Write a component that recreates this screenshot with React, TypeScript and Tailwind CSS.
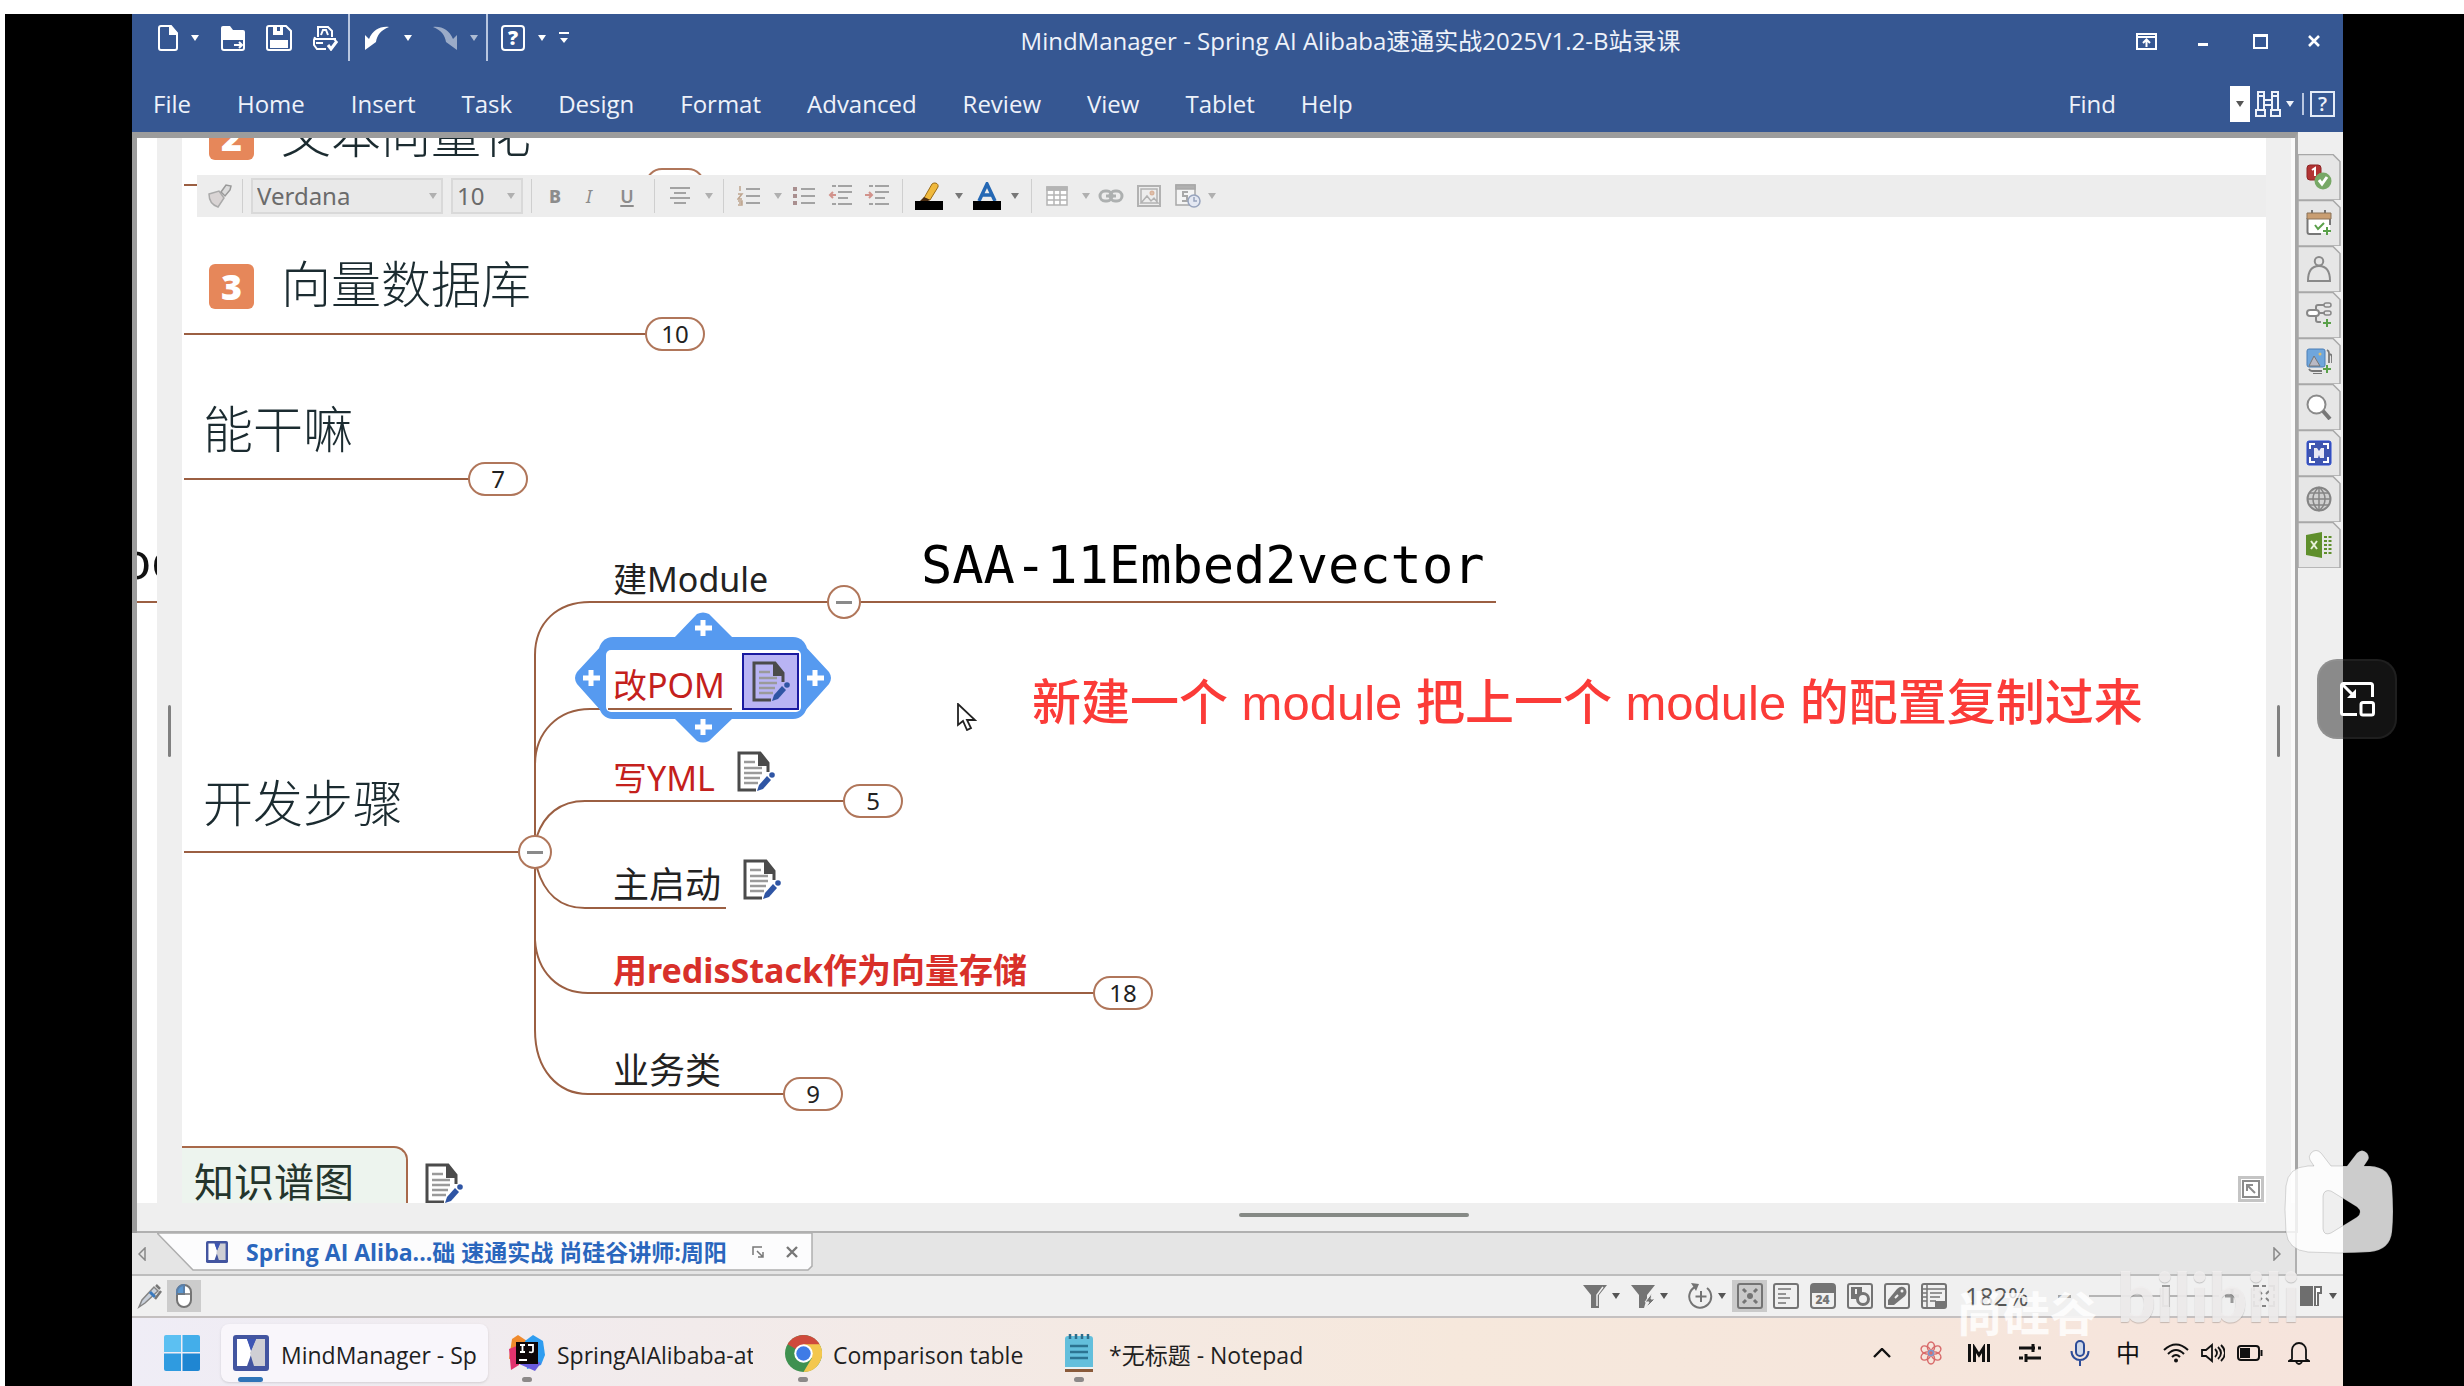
import type { ReactNode } from "react";

const UI = "font-['Open_Sans','Noto_Sans_CJK_SC',sans-serif]";
const MAP = "font-['Noto_Sans','Noto_Sans_CJK_SC',sans-serif]";

function Caret({ className = "" }: { className?: string }) {
  return (
    <svg viewBox="0 0 8 6" className={`h-[6px] w-[8px] shrink-0 fill-current ${className}`} aria-hidden="true">
      <path d="M0 0h8L4 6z" />
    </svg>
  );
}

function IconButton({ label, className = "", children }: { label: string; className?: string; children: ReactNode }) {
  return (
    <button type="button" aria-label={label} className={`flex shrink-0 items-center justify-center ${className}`}>
      {children}
    </button>
  );
}

/* ---------- Title bar ---------- */

function QuickAccess() {
  return (
    <div className="flex h-[47px] items-center self-start text-white">
      <IconButton label="New" className="w-[40px]">
        <svg viewBox="0 0 20 26" className="h-[26px] w-[20px]" fill="none" stroke="currentColor" strokeWidth="2">
          <path d="M3 1h10l6 7v15a2 2 0 0 1-2 2H3a2 2 0 0 1-2-2V3a2 2 0 0 1 2-2z" />
          <path d="M12 1v8h7z" fill="currentColor" />
        </svg>
      </IconButton>
      <IconButton label="New options" className="w-[14px]"><Caret /></IconButton>
      <IconButton label="Open" className="ml-2 w-[46px]">
        <svg viewBox="0 0 26 26" className="size-[26px]">
          <path d="M1 3a2 2 0 0 1 2-2h7l3 4h10a2 2 0 0 1 2 2v8H1z" fill="currentColor" />
          <path d="M2 12v11a2 2 0 0 0 2 2h18a2 2 0 0 0 2-2V12" fill="none" stroke="currentColor" strokeWidth="2" />
          <path d="M14 20h8M19 17l3 3-3 3" fill="none" stroke="currentColor" strokeWidth="2" />
        </svg>
      </IconButton>
      <IconButton label="Save" className="w-[46px]">
        <svg viewBox="0 0 26 26" className="size-[26px]">
          <path d="M3 1h17l5 5v17a2 2 0 0 1-2 2H3a2 2 0 0 1-2-2V3a2 2 0 0 1 2-2z" fill="none" stroke="currentColor" strokeWidth="2" />
          <path d="M7 1h4v5h3V1h3v9H7zM4 15h18v8H4z" fill="currentColor" />
        </svg>
      </IconButton>
      <IconButton label="Print" className="w-[46px]">
        <svg viewBox="0 0 26 26" className="size-[26px]" fill="none" stroke="currentColor" strokeWidth="2">
          <path d="M6 12V2h10l4 4v6M2 14h22M3 12l-1 3v5l3 4h9M4 18h7M22 14l2 2M9 10l2-5h3l2 5" />
          <path d="M16 20l3 4 6-8" strokeWidth="3" />
        </svg>
      </IconButton>
      <div className="h-[47px] w-[2px] bg-[#b8c6e0]" />
      <IconButton label="Undo" className="w-[54px]">
        <svg viewBox="0 0 26 26" className="size-[26px]">
          <path d="M1 25V10l4 4C9 5 16 1 25 2 17 5 13 10 12 17z" fill="currentColor" />
        </svg>
      </IconButton>
      <IconButton label="Undo list" className="w-[8px]"><Caret /></IconButton>
      <IconButton label="Redo" className="ml-2 w-[50px] opacity-50">
        <svg viewBox="0 0 26 26" className="size-[26px]">
          <path d="M25 25V10l-4 4C17 5 10 1 1 2c8 3 12 8 13 15z" fill="currentColor" />
        </svg>
      </IconButton>
      <IconButton label="Redo list" className="w-[8px] opacity-60"><Caret /></IconButton>
      <div className="ml-2 h-[47px] w-[2px] bg-[#b8c6e0]" />
      <IconButton label="Help" className="w-[50px]">
        <span className="flex h-[26px] w-[24px] items-center justify-center rounded border-2 border-white text-xl leading-none font-extrabold">?</span>
      </IconButton>
      <IconButton label="Help options" className="w-[8px]"><Caret /></IconButton>
      <IconButton label="Customize toolbar" className="w-[36px]">
        <svg viewBox="0 0 10 12" className="h-[12px] w-[10px] fill-current"><path d="M0 0h10v2H0zM1 6h8l-4 5z" /></svg>
      </IconButton>
    </div>
  );
}

function WindowControls() {
  return (
    <div className="flex h-full items-center text-white">
      <IconButton label="Ribbon display" className="w-[54px]">
        <svg viewBox="0 0 21 17" className="h-[17px] w-[21px]" fill="none" stroke="currentColor" strokeWidth="2">
          <path d="M1 1h19v15H1zM1 4h19M10.500 14V7M7 10l3.500-3.500L14 10" />
        </svg>
      </IconButton>
      <IconButton label="Minimize" className="w-[60px]"><span className="mt-[6px] h-[3px] w-[10px] bg-white" /></IconButton>
      <IconButton label="Maximize" className="w-[54px]"><span className="h-[15px] w-[15px] border-2 border-t-[3px] border-white" /></IconButton>
      <IconButton label="Close" className="w-[54px]">
        <svg viewBox="0 0 12 12" className="size-[12px]" stroke="currentColor" strokeWidth="2.600"><path d="M1 1l10 10M11 1L1 11" /></svg>
      </IconButton>
    </div>
  );
}

const MENUS = ["File", "Home", "Insert", "Task", "Design", "Format", "Advanced", "Review", "View", "Tablet", "Help"];

function Header() {
  return (
    <header className="bg-[#365792] text-[#eef2fa]">
      <div className="flex h-[54px] items-center pr-[2px] pl-[16px]">
        <QuickAccess />
        <h1 className="flex-1 text-center text-[24px] leading-[40px] whitespace-nowrap">MindManager - Spring AI Alibaba速通实战2025V1.2-B站录课</h1>
        <WindowControls />
      </div>
      <div className="flex h-[64px] items-center justify-between pt-[8px] pr-[8px]">
        <nav className="flex gap-[46px] pl-[21px] text-[24px]">
          {MENUS.map((m) => (
            <button key={m} type="button" className="leading-[36px]">{m}</button>
          ))}
        </nav>
        <div className="flex items-center">
          <label htmlFor="find" className="text-[24px] leading-[36px]">Find</label>
          <input id="find" className="h-[36px] w-[114px] bg-transparent px-2 outline-none" />
          <IconButton label="Find history" className="h-[36px] w-[20px] bg-white text-[#555]"><Caret /></IconButton>
          <IconButton label="Search" className="w-[36px]">
            <svg viewBox="0 0 26 26" className="size-[26px]" fill="none" stroke="currentColor" strokeWidth="2">
              <path d="M3 1h6v4H3zM17 1h6v4h-6zM3 5v14M9 5v14M17 5v14M23 5v14M9 9h8M9 14h8M1 19h9v6H1zM16 19h9v6h-9z" />
            </svg>
          </IconButton>
          <Caret />
          <div className="ml-[8px] h-[22px] w-[2px] bg-[#b8c6e0]" />
          <button type="button" aria-label="Help topics" className="ml-[6px] flex h-[26px] w-[25px] items-center justify-center border-2 border-[#e4ebf7] text-xl leading-none font-semibold">?</button>
        </div>
      </div>
    </header>
  );
}

/* ---------- Formatting toolbar ---------- */

const sep = <div className="h-[34px] w-px shrink-0 bg-[#cfcfcf]" />;

function Lines({ d, children }: { d: string; children?: ReactNode }) {
  return (
    <svg viewBox="0 0 24 22" className="h-[22px] w-[24px]" fill="none" stroke="#a3a3a3" strokeWidth="2">
      <path d={d} />
      {children}
    </svg>
  );
}

function FormatBar() {
  return (
    <div className="absolute top-[37px] right-0 left-[15px] flex h-[42px] items-center bg-[#ededed] text-[#b0b0b0]">
      <IconButton label="Format painter" className="w-[45px]">
        <svg viewBox="0 0 26 24" className="h-[24px] w-[26px]">
          <path d="M2 10l10-3 5 7-6 9C5 21 2 16 2 10z" fill="#d9d4d4" stroke="#aaa" strokeWidth="1.500" />
          <path d="M14 8l5-7 5 1-1 4-5 6z" fill="#dcdcdc" stroke="#999" strokeWidth="1.500" />
        </svg>
      </IconButton>
      {sep}
      <div className="relative mx-[8px] flex items-center">
        <select aria-label="Font" className="h-[36px] w-[192px] appearance-none border-2 border-[#d9d9d9] bg-[#e9e9e9] px-[4px] text-[24px] leading-none text-[#6b6b6b]"><option>Verdana</option></select>
        <Caret className="pointer-events-none absolute right-[6px]" />
      </div>
      <div className="relative mr-[8px] flex items-center">
        <select aria-label="Font size" className="h-[36px] w-[72px] appearance-none border-2 border-[#d9d9d9] bg-[#e9e9e9] px-[4px] text-[24px] leading-none text-[#6b6b6b]"><option>10</option></select>
        <Caret className="pointer-events-none absolute right-[8px]" />
      </div>
      {sep}
      <button type="button" className="w-[46px] text-[18px] font-extrabold text-[#8c8c8c]">B</button>
      <button type="button" className="w-[22px] text-[18px] text-[#8c8c8c] italic">I</button>
      <button type="button" className="w-[54px] text-[18px] font-semibold text-[#8c8c8c] underline decoration-2 underline-offset-2">U</button>
      {sep}
      <IconButton label="Align" className="w-[50px]"><Lines d="M2 3h20M6 8h12M2 13h20M6 18h12" /></IconButton>
      <Caret className="mr-[10px]" />
      {sep}
      <IconButton label="Numbered list" className="w-[50px]">
        <Lines d="M9 4h14M9 11h14M9 18h14"><path d="M3 1v5M1 9h4l-4 5h4M1 16h4v4H1M5 18H2" stroke="#bfa58f" strokeWidth="1.500" /></Lines>
      </IconButton>
      <Caret className="mr-[4px]" />
      <IconButton label="Bullets" className="w-[36px]">
        <Lines d="M9 4h14M9 11h14M9 18h14"><path d="M1 4h4M1 11h4M1 18h4" stroke="#a98f8f" strokeWidth="4" /></Lines>
      </IconButton>
      <IconButton label="Outdent" className="w-[36px]">
        <Lines d="M4 1h4M10 1h14M10 7h14M10 13h10M4 19h4M10 19h14"><path d="M8 10H2M5 7l-3 3 3 3" stroke="#d2938c" /></Lines>
      </IconButton>
      <IconButton label="Indent" className="mr-[6px] w-[38px]">
        <Lines d="M4 1h4M10 1h14M10 7h14M10 13h10M4 19h4M10 19h14"><path d="M0 10h6M4 7l3 3-3 3" stroke="#d2938c" /></Lines>
      </IconButton>
      {sep}
      <IconButton label="Highlight" className="w-[52px]">
        <svg viewBox="0 0 28 28" className="size-[28px]">
          <path d="M9 16L17 2c2-2 7-1 6 3l-8 13z" fill="#f0b93c" stroke="#9a6a14" strokeWidth="1" />
          <path d="M4 20l5-5 6 3-6 3z" fill="#4a2c10" />
          <path d="M0 19h28v9H0z" fill="#000" />
        </svg>
      </IconButton>
      <Caret className="text-[#777]" />
      <IconButton label="Font color" className="w-[48px]">
        <svg viewBox="0 0 28 28" className="size-[28px]">
          <path d="M6 19L14 2l8 17M9 13h10" fill="none" stroke="#2568b4" strokeWidth="3.500" />
          <path d="M0 19h28v9H0z" fill="#000" />
        </svg>
      </IconButton>
      <Caret className="mr-[12px] text-[#777]" />
      {sep}
      <IconButton label="Table" className="w-[50px]">
        <svg viewBox="0 0 22 20" className="h-[20px] w-[22px]" fill="#fff" stroke="#b4b4b4" strokeWidth="1.500">
          <path d="M1 1h20v18H1z" /><path d="M1 4h20M1 9h20M1 14h20M8 4v15M14 4v15" /><path d="M1 1h20v3H1z" fill="#b4b4b4" />
        </svg>
      </IconButton>
      <Caret />
      <IconButton label="Link" className="ml-[2px] w-[38px]">
        <svg viewBox="0 0 26 14" className="h-[14px] w-[26px]" fill="none" stroke="#adb0b0" strokeWidth="3">
          <rect x="2" y="2" width="12" height="10" rx="5" /><rect x="12" y="2" width="12" height="10" rx="5" /><path d="M8 7h10" />
        </svg>
      </IconButton>
      <IconButton label="Image" className="w-[38px]">
        <svg viewBox="0 0 24 22" className="h-[22px] w-[24px]" fill="none" stroke="#b2b2b2" strokeWidth="2">
          <path d="M1 1h22v20H1z" /><path d="M4 18l6-7 4 5 3-3 4 5zM4 4h16v14H4z" strokeWidth="1.500" /><circle cx="15" cy="8" r="1.500" stroke="#d9b39b" />
        </svg>
      </IconButton>
      <IconButton label="Date" className="w-[40px]">
        <svg viewBox="0 0 26 24" className="h-[24px] w-[26px]" fill="none" stroke="#a8a8a8" strokeWidth="1.500">
          <path d="M1 1h19v20H1z" fill="#f4f4f4" /><path d="M1 1h19v4H1z" fill="#b0b0b0" /><path d="M13 8H8v4h4v5H7" strokeWidth="2" />
          <circle cx="19" cy="17" r="6" fill="#e4e8f2" stroke="#98a4bd" /><path d="M19 13v4h3" stroke="#98a4bd" />
        </svg>
      </IconButton>
      <Caret />
    </div>
  );
}

/* ---------- Mind map ---------- */

function Count({ n, className }: { n: number; className: string }) {
  return (
    <button type="button" className={`absolute flex h-[34px] w-[60px] items-center justify-center rounded-[17px] border-2 border-[#b0765a] bg-white text-[24px] leading-[30px] text-[#222] ${className}`}>
      {n}
    </button>
  );
}

function Collapse({ className }: { className: string }) {
  return (
    <button type="button" aria-label="Collapse" className={`absolute flex size-[34px] items-center justify-center rounded-full border-2 border-[#b0765a] bg-white ${className}`}>
      <span className="h-[3px] w-[16px] bg-[#8a8a8a]" />
    </button>
  );
}

function NoteIcon({ className = "" }: { className?: string }) {
  return (
    <svg viewBox="0 0 40 42" className={`h-[42px] w-[40px] ${className}`} aria-label="Notes">
      <path d="M20 39H3V2h21l8 10v9" fill="none" stroke="#4b4b4b" strokeWidth="3" />
      <path d="M22 1l11 12v2H22z" fill="#4b4b4b" />
      <path d="M8 11h11M8 17h18M8 22h18M8 27h16M8 32h14" stroke="#9a9a9a" strokeWidth="2.500" />
      <path d="M21 40l2-6 8-9 4 4-8 9z" fill="#2f55a4" />
      <circle cx="36" cy="24" r="2.800" fill="#2f55a4" />
    </svg>
  );
}

function NumberBadge({ n, className }: { n: number; className: string }) {
  return (
    <span className={`absolute flex size-[45px] items-center justify-center rounded-md bg-[#e6875a] font-['Open_Sans',sans-serif] text-[36px] leading-none font-extrabold text-white ${className}`}>{n}</span>
  );
}

function Topic({ className, children }: { className: string; children: ReactNode }) {
  return <div className={`absolute leading-none whitespace-nowrap ${className}`}>{children}</div>;
}

function Canvas() {
  return (
    <section aria-label="Mind map" className={`relative min-w-0 flex-1 overflow-hidden bg-white ${MAP}`}>
      <div className="absolute top-[1008px] left-0 h-[70px] w-[226px] rounded-tr-[14px] border-t-2 border-r-2 border-[#a8694a] bg-[#edf4ee]" />
      <svg viewBox="182 138 2084 1066" className="absolute top-0 left-0 h-[1066px] w-[2084px]" fill="none" stroke="#9b5f42" strokeWidth="2" aria-hidden="true">
        <path d="M184 185h466M184 334h462M184 479h286M184 852h336" />
        <path d="M535 836V655C535 622 558 602 590 602H828M861 602H1496" />
        <path d="M535 765C535 732 558 709 590 709H606" />
        <path d="M537 836C544 815 560 801 585 801H844" />
        <path d="M537 868C544 893 560 908 585 908H726" />
        <path d="M535 868V940C537 972 558 993 588 993H1094" />
        <path d="M535 868V1030C535 1070 558 1094 588 1094H784" />
        <g stroke="none" fill="#569af0">
          <path d="M674 638L697 614q6-3 12 0L733 638zM674 718L697 741q6 3 12 0L733 718zM602 645L577 672q-4 6 0 12L602 712zM804 645L829 672q4 6 0 12L804 712z" />
          <rect x="599" y="637" width="208" height="82" rx="14" />
          <rect x="606" y="650" width="195" height="62" rx="5" fill="#fff" />
        </g>
        <path d="M695 628h17M703 620v16M695 727h17M703 719v16M583 678h17M591 670v16M807 678h17M815 670v16" stroke="#fff" strokeWidth="5" />
        <path d="M608 709h124" />
      </svg>

      <NumberBadge n={2} className="-top-[23px] left-[27px]" />
      <Topic className="-top-[29px] left-[99px] text-[50px] font-light text-[#1b2b30]">文本向量化</Topic>
      <Count n={11} className="top-[30px] left-[463px]" />
      <NumberBadge n={3} className="top-[126px] left-[27px]" />
      <Topic className="top-[121px] left-[99px] text-[50px] font-light text-[#1b2b30]">向量数据库</Topic>
      <Count n={10} className="top-[179px] left-[463px]" />
      <Topic className="top-[266px] left-[21px] text-[50px] font-light text-[#1b2b30]">能干嘛</Topic>
      <Count n={7} className="top-[324px] left-[286px]" />
      <Topic className="top-[640px] left-[21px] text-[50px] font-light text-[#1b2b30]">开发步骤</Topic>
      <Collapse className="top-[697px] left-[336px]" />

      <Topic className="top-[424px] left-[431px] text-[34px] text-[#222]">建Module</Topic>
      <Collapse className="top-[447px] left-[645px]" />
      <Topic className="top-[401px] left-[739px] font-['DejaVu_Sans_Mono',monospace] text-[52px] text-black">SAA-11Embed2vector</Topic>

      <Topic className="top-[530px] left-[431px] text-[34px] text-[#c4201c]">改POM</Topic>
      <div className="absolute top-[515px] left-[560px] flex size-[57px] items-center justify-center border-2 border-[#1a1aa0] bg-[#b9b4f4]">
        <NoteIcon />
      </div>
      <Topic className="top-[623px] left-[431px] text-[34px] text-[#c4201c]">写YML</Topic>
      <NoteIcon className="absolute top-[613px] left-[554px]" />
      <Count n={5} className="top-[646px] left-[661px]" />
      <Topic className="top-[729px] left-[431px] text-[36px] text-[#222]">主启动</Topic>
      <NoteIcon className="absolute top-[721px] left-[560px]" />
      <Topic className="top-[815px] left-[431px] text-[34px] font-bold text-[#d8302a]">用redisStack作为向量存储</Topic>
      <Count n={18} className="top-[838px] left-[911px]" />
      <Topic className="top-[915px] left-[431px] text-[36px] text-[#222]">业务类</Topic>
      <Count n={9} className="top-[939px] left-[601px]" />
      <Topic className="top-[1024px] left-[12px] text-[40px] text-[#24352c]">知识谱图</Topic>
      <NoteIcon className="absolute top-[1025px] left-[242px]" />

      <p className="absolute top-[541px] left-[850px] font-['Liberation_Sans','Noto_Sans_CJK_SC',sans-serif] text-[49px] leading-none font-medium whitespace-nowrap text-[#fb3b38]">
        新建一个 module 把上一个 module 的配置复制过来
      </p>
      <svg viewBox="0 0 20 28" className="absolute top-[565px] left-[775px] h-[28px] w-[20px]" aria-hidden="true">
        <path d="M1 1v21l5-4 4 9 4-2-4-8h8z" fill="#fff" stroke="#222" strokeWidth="1.800" />
      </svg>

      <FormatBar />
      <button type="button" aria-label="Map overview" className="absolute right-[2px] bottom-[1px] flex size-[26px] items-center justify-center border-[3px] border-[#c4c4c4] bg-white">
        <svg viewBox="0 0 18 18" className="size-[18px]" fill="none" stroke="#8c8c8c" strokeWidth="2"><path d="M1 1h16v16H1zM13 13L6 6M5 11V5h6" /></svg>
      </button>
    </section>
  );
}

/* ---------- Side panel tabs ---------- */

const plus = <path d="M21 17v8M17 21h8" stroke="#5aa04a" strokeWidth="2" />;

const SIDE: { label: string; icon: ReactNode }[] = [
  {
    label: "Markers",
    icon: (
      <>
        <rect x="1" y="1" width="14" height="15" rx="3" fill="#b23434" stroke="#8d2424" />
        <path d="M6 6l3-2v8" stroke="#fff" strokeWidth="2" />
        <circle cx="17" cy="17" r="8.500" fill="#77a866" stroke="none" />
        <path d="M13 16l3 4 5-7" stroke="#fff" strokeWidth="3" />
      </>
    ),
  },
  {
    label: "Task info",
    icon: (
      <>
        <path d="M2 4h22v19H2z" fill="#fff" stroke="none" />
        <path d="M1.500 8v14a2 2 0 0 0 2 2H15M24 8v7M6 0v4M19 0v4" stroke="#777" strokeWidth="2" />
        <path d="M1 3h24v6H1z" fill="#c99e72" stroke="#8a7258" />
        <path d="M9 15l3 4 6-6" stroke="#5aa04a" strokeWidth="2" />
        {plus}
      </>
    ),
  },
  { label: "Resources", icon: <path d="M13 1a4 4 0 1 1 0 8.500A4 4 0 0 1 13 1zM2 25c0-10 4-15 11-15s11 5 11 15z" stroke="#8a8a8a" strokeWidth="2" /> },
  {
    label: "Map parts",
    icon: (
      <>
        <path d="M10 8V5a2 2 0 0 1 2-2h6M13 11h6M10 14v4a2 2 0 0 0 2 2h3" stroke="#888" strokeWidth="2" />
        <rect x="1" y="8" width="12" height="6" rx="3" fill="#fff" stroke="#888" strokeWidth="2" />
        <rect x="18" y="1" width="7" height="4" rx="2" stroke="#888" strokeWidth="1.500" />
        <rect x="18" y="9" width="7" height="4" rx="2" stroke="#888" strokeWidth="1.500" />
        {plus}
      </>
    ),
  },
  {
    label: "Library",
    icon: (
      <>
        <rect x="1" y="1" width="18" height="18" rx="2" fill="#6fa6dc" stroke="#4d7fb6" />
        <path d="M3 18l5-10 6 10z" fill="#b9b9c4" stroke="#777" />
        <circle cx="14" cy="6" r="1.500" fill="#e0c070" stroke="none" />
        <path d="M21 2q2 1 2 3v10M24 6q2 1 2 3v6M3 21q1 2 3 2h10M7 26h9" stroke="#777" strokeWidth="1.800" />
        {plus}
      </>
    ),
  },
  { label: "Search", icon: <><circle cx="10.500" cy="10.500" r="9" fill="#fff" stroke="#8a8a8a" strokeWidth="2" /><path d="M17 17l7 8" stroke="#777" strokeWidth="4" /></> },
  {
    label: "Capture",
    icon: (
      <>
        <rect x="1" y="1" width="24" height="24" rx="2" fill="#3f55b0" stroke="#2b4bd0" />
        <path d="M4 9V4h5M17 4h5v5M22 17v5h-5M9 22H4v-5" stroke="#fff" strokeWidth="2" />
        <path d="M8 8h3l2 3 2-3h3v10h-4l-1-3-1 3H8z" fill="#e8e8f4" stroke="none" />
      </>
    ),
  },
  {
    label: "Browser",
    icon: <><circle cx="13" cy="13" r="11.500" fill="#cfcfcf" stroke="#858585" strokeWidth="2" /><path d="M13 1v24M1 13h24M3 7h20M3 19h20M13 1c-8 7-8 17 0 24M13 1c8 7 8 17 0 24" stroke="#858585" strokeWidth="1.500" /></>,
  },
  {
    label: "Excel",
    icon: (
      <>
        <path d="M0 3l16-3v26L0 23z" fill="#5f8f2c" stroke="none" />
        <path d="M5 9l6 8M11 9l-6 8" stroke="#e6f0d8" strokeWidth="2" />
        <path d="M18 5h8M18 9h8M18 13h8M18 17h8M18 21h8" stroke="#5f8f2c" strokeWidth="2" strokeDasharray="3 1.500" />
      </>
    ),
  },
];

function SideTabs() {
  return (
    <aside className="w-[45px] shrink-0 bg-[#efefef] pt-[22px]">
      {SIDE.map((s) => (
        <button key={s.label} type="button" aria-label={s.label} className="relative flex h-[46px] w-[43px] items-center pl-[8px]">
          <svg viewBox="0 0 43 46" className="absolute inset-0 size-full" aria-hidden="true">
            <path d="M0 .500h35l7 7V46H0z" fill="#e6e6e6" stroke="#a8a8a8" strokeWidth="1.500" />
          </svg>
          <svg viewBox="0 0 26 26" className="relative size-[26px]" fill="none" aria-hidden="true">{s.icon}</svg>
        </button>
      ))}
    </aside>
  );
}

/* ---------- Document tab strip ---------- */

function MindIcon({ className }: { className: string }) {
  return (
    <svg viewBox="0 0 36 36" className={className} aria-hidden="true">
      <rect width="36" height="36" rx="3" fill="#4355a0" />
      <path d="M4 4h10l5 13-5 14H4z" fill="#fff" />
      <path d="M32 4h-9l-6 14 4 13h11z" fill="#cfcfd4" />
      <path d="M14 4h9l-5 12z" fill="#3d56b5" />
    </svg>
  );
}

function DocTabs() {
  return (
    <div className="flex h-[43px] shrink-0 border-b-2 border-[#bdbdbd] bg-[#e5e5e5]">
      <IconButton label="Scroll tabs left" className="w-[20px]">
        <svg viewBox="0 0 8 14" className="h-[14px] w-[8px]" fill="none" stroke="#888" strokeWidth="1.500"><path d="M7 1v12L1 7z" /></svg>
      </IconButton>
      <div className="relative ml-[5px] flex h-[38px] w-[656px] items-center pl-[49px]">
        <svg viewBox="0 0 656 39" preserveAspectRatio="none" className="absolute inset-0 size-full" aria-hidden="true">
          <path d="M0 0L36 38H651l4-4V0z" fill="#fcfcfd" stroke="#aeaeae" strokeWidth="1.500" />
        </svg>
        <MindIcon className="relative h-[24px] w-[22px]" />
        <button type="button" className="relative ml-[18px] text-[23px] leading-[34px] font-bold whitespace-nowrap text-[#2a66bd]">Spring AI Aliba...础 速通实战 尚硅谷讲师:周阳</button>
        <div className="relative ml-auto flex items-center pr-[4px]">
          <IconButton label="Restore" className="w-[34px]">
            <svg viewBox="0 0 12 12" className="size-[12px]" fill="none" stroke="#777"><path d="M1 9V1h9M5 5l6 6M11 6v5H6" strokeWidth="1.500" /></svg>
          </IconButton>
          <IconButton label="Close tab" className="w-[34px]">
            <svg viewBox="0 0 12 12" className="size-[12px]" stroke="#777" strokeWidth="2.400"><path d="M1 1l10 10M11 1L1 11" /></svg>
          </IconButton>
        </div>
      </div>
      <div className="flex-1" />
      <IconButton label="Scroll tabs right" className="w-[38px] border-r-2 border-[#b0b0b0]">
        <svg viewBox="0 0 8 14" className="h-[14px] w-[8px]" fill="none" stroke="#888" strokeWidth="1.500"><path d="M1 1v12l6-6z" /></svg>
      </IconButton>
      <div className="w-[46px] bg-[#efefef]" />
    </div>
  );
}

/* ---------- Status bar ---------- */

function Glyph({ children }: { children: ReactNode }) {
  return <svg viewBox="0 0 26 26" className="size-[26px]" fill="none" stroke="#747474" strokeWidth="2" aria-hidden="true">{children}</svg>;
}
const frame = <rect x="1" y="1" width="24" height="24" rx="2" />;

function StatusBar() {
  return (
    <div className="flex h-[42px] shrink-0 items-center border-b-2 border-[#c4c0c0] bg-[#f0f0f0] text-[#555]">
      <IconButton label="Pen" className="h-full w-[35px]">
        <Glyph><path d="M2 24l3-7L17 4l4 4L8 20z" fill="#c9d0da" stroke="#858585" strokeWidth="1.500" /><path d="M13 9l5 5" stroke="#3a7abf" strokeWidth="3" /><path d="M19 2l4 4M24 8l-6 8" stroke="#777" strokeWidth="2.500" /></Glyph>
      </IconButton>
      <IconButton label="Mouse" className="h-[32px] w-[34px] bg-[#cccccc]">
        <Glyph><rect x="6" y="2" width="14" height="22" rx="7" fill="#fff" /><path d="M13 2v9H6V9c0-4 3-7 7-7z" fill="#5b97d0" stroke="#5b7fa8" /><path d="M6 11h14" strokeWidth="1.500" /></Glyph>
      </IconButton>
      <div className="flex-1" />
      <IconButton label="Filter" className="w-[26px]"><Glyph><path d="M1 2h24l-8 10v13H9V12z" fill="#747474" stroke="none" /><path d="M21 4l-6 8v11" stroke="#f0f0f0" strokeWidth="1.500" /></Glyph></IconButton>
      <Caret className="ml-[4px]" />
      <IconButton label="Power filter" className="ml-[10px] w-[26px]"><Glyph><path d="M1 2h24l-8 10v3l-3 10H9V12z" fill="#747474" stroke="none" /><path d="M22 10l-7 9h4l-3 6 9-9h-4z" fill="#747474" stroke="#f0f0f0" strokeWidth="1" /></Glyph></IconButton>
      <Caret className="ml-[4px]" />
      <IconButton label="Show level" className="ml-[20px] w-[26px]"><Glyph><path d="M19 5a11 11 0 1 1-12-1M13 8v11M7.500 13.500h11" /><path d="M3 0l8 1-3 7z" fill="#747474" stroke="none" /></Glyph></IconButton>
      <Caret className="ml-[4px]" />
      <IconButton label="Map view" className="ml-[6px] h-[32px] w-[35px] bg-[#cacaca]"><Glyph>{frame}<path d="M6 6l3 3M20 6l-3 3M6 20l3-3M20 20l-3-3" strokeWidth="3" /><circle cx="13" cy="13" r="3" fill="#747474" stroke="none" /></Glyph></IconButton>
      <IconButton label="Outline view" className="w-[37px]"><Glyph>{frame}<path d="M5 6h13M5 11h8M5 15h12M5 20h8" strokeWidth="1.500" /></Glyph></IconButton>
      <IconButton label="Schedule view" className="w-[37px]">
        <span className="flex size-[26px] items-end justify-center rounded-sm border-2 border-t-[10px] border-[#747474] pb-px text-[12px] leading-none font-extrabold text-[#747474]">24</span>
      </IconButton>
      <IconButton label="Icon view" className="w-[37px]"><Glyph>{frame}<path d="M4 4h11v12H4z" fill="#747474" stroke="none" /><path d="M9 6v5" stroke="#f0f0f0" /><circle cx="16" cy="16" r="5.500" fill="#f0f0f0" strokeWidth="3" /></Glyph></IconButton>
      <IconButton label="Tag view" className="w-[37px]"><Glyph>{frame}<path d="M4 17L13 6q4-4 8-1 3 4 0 8L10 22H4z" fill="#747474" stroke="none" /><path d="M11 15l3-3" stroke="#f0f0f0" /><circle cx="18" cy="8" r="1.500" fill="#f0f0f0" stroke="none" /></Glyph></IconButton>
      <IconButton label="Gantt view" className="w-[38px]"><Glyph>{frame}<path d="M6 1v24M1 6h24M9 10h12M9 14h10M9 18h6M2 10h4M2 14h4M2 18h4" strokeWidth="1.500" /><path d="M14 18h10v7H14z" fill="#747474" stroke="none" /></Glyph></IconButton>
      <output htmlFor="zoom" className="w-[98px] pl-[12px] text-[25px] leading-[36px]">182%</output>
      <IconButton label="Zoom out" className="w-[26px]"><span className="h-[3px] w-[13px] bg-[#a5a5a5]" /></IconButton>
      <input
        id="zoom"
        aria-label="Zoom"
        type="range"
        defaultValue={60}
        className="ml-[12px] h-[22px] w-[130px] appearance-none bg-transparent [&::-webkit-slider-runnable-track]:h-[2px] [&::-webkit-slider-runnable-track]:bg-[#b5b5b5] [&::-webkit-slider-thumb]:-mt-[10px] [&::-webkit-slider-thumb]:h-[22px] [&::-webkit-slider-thumb]:w-[8px] [&::-webkit-slider-thumb]:appearance-none [&::-webkit-slider-thumb]:border-2 [&::-webkit-slider-thumb]:border-[#9a9a9a] [&::-webkit-slider-thumb]:bg-[#eee]"
      />
      <IconButton label="Zoom in" className="w-[26px]">
        <svg viewBox="0 0 14 14" className="size-[14px]" stroke="#999" strokeWidth="3"><path d="M7 0v14M0 7h14" /></svg>
      </IconButton>
      <IconButton label="Fit map" className="mr-[10px] w-[38px]">
        <svg viewBox="0 0 22 22" className="size-[22px]" fill="none" stroke="#858585" strokeWidth="2"><path d="M1 6V1h5M9 1h4M16 1h5v5M21 9v4M21 16v5h-5M13 21H9M6 21H1v-5M1 13V9M6 6l3 3M16 6l-3 3M6 16l3-3M16 16l-3-3" /></svg>
      </IconButton>
      <IconButton label="Task panes" className="w-[36px]">
        <svg viewBox="0 0 22 20" className="h-[20px] w-[22px]"><path d="M0 0h13v20H0z" fill="#6e6e6e" /><path d="M15 20V1h6v6h-3v13z" fill="#fff" stroke="#6e6e6e" strokeWidth="2" /></svg>
      </IconButton>
      <Caret className="mr-[6px]" />
    </div>
  );
}

/* ---------- Windows taskbar ---------- */

const TASKS: { title: string; clip?: boolean; active?: boolean; icon: ReactNode }[] = [
  { title: "MindManager - Sp", clip: true, active: true, icon: <MindIcon className="size-[36px]" /> },
  {
    title: "SpringAIAlibaba-at",
    clip: true,
    icon: (
      <svg viewBox="0 0 36 36" className="size-[36px]">
        <path d="M3 4l6-4 9 6-4 14L0 24z" fill="#f08a2c" />
        <path d="M0 14l10-4v20l-8 5z" fill="#e0336e" />
        <path d="M16 6L24 0l10 6 2 14-4 10-14 4z" fill="#2f9df0" />
        <path d="M8 28l10-6 14 6-6 8z" fill="#6a5be0" />
        <path d="M7 7h22v22H7z" fill="#0d0507" />
        <path d="M11 10h5M13.500 10v7M11 17h5M19 10h5v6q0 2-4 1M10 25h8" fill="none" stroke="#fff" strokeWidth="1.800" />
      </svg>
    ),
  },
  {
    title: "Comparison table",
    icon: (
      <svg viewBox="0 0 36 36" className="size-[37px]">
        <circle cx="18" cy="18" r="18" fill="#3f9150" />
        <path d="M18 18L2.500 9A18 18 0 0 1 33.600 9z" fill="#cf4a3c" />
        <path d="M18 9h15.600A18 18 0 0 1 18 36l8-13.500z" fill="#f3c74e" />
        <circle cx="18" cy="18" r="9" fill="#fff" />
        <circle cx="18" cy="18" r="7" fill="#3f7be6" />
      </svg>
    ),
  },
  {
    title: "*无标题 - Notepad",
    icon: (
      <svg viewBox="0 0 28 38" className="h-[38px] w-[28px]">
        <rect y="2" width="28" height="36" rx="3" fill="#63bfdc" />
        <path d="M0 33h28v2H0z" fill="#e9f2f4" /><path d="M0 35h28v3H0z" fill="#8a5a3a" />
        <path d="M5 0v5M11 0v5M17 0v5M23 0v5" stroke="#2c6d8c" strokeWidth="2.500" />
        <path d="M5 12h18M5 18h18M5 24h18" stroke="#2c7391" strokeWidth="2.500" />
      </svg>
    ),
  },
];

function Taskbar() {
  return (
    <footer className="flex h-[68px] shrink-0 items-center bg-linear-to-r from-[#efedf6] via-[#f6e8dc] via-60% to-[#f6e4dc] pt-[2px] text-[23px] text-[#1f1f1f]">
      <IconButton label="Start" className="mr-[3px] ml-[14px] w-[72px]">
        <svg viewBox="0 0 36 36" className="size-[36px]" fill="#2f9be0">
          <path d="M0 2q0-2 2-2h15v17H0z" fill="#5cc0f2" /><path d="M18.500 0H34q2 0 2 2v15H18.500z" fill="#43aeea" />
          <path d="M0 18.500h17V36H2q-2 0-2-2z" /><path d="M18.500 18.500H36V34q0 2-2 2H18.500z" fill="#1f86d2" />
        </svg>
      </IconButton>
      <div className="flex gap-[9px]">
        {TASKS.map((t) => (
          <button key={t.title} type="button" className={`relative flex h-[58px] w-[267px] items-center rounded-lg ${t.active ? "bg-[#f9f6fb] shadow-sm" : ""}`}>
            <span className="flex w-[60px] shrink-0 justify-center">{t.icon}</span>
            <span className={`pt-[4px] leading-[34px] whitespace-nowrap ${t.clip ? "w-[196px] overflow-hidden text-left" : ""}`}>{t.title}</span>
            <span className={`absolute bottom-0 h-[5px] rounded-full ${t.active ? "left-[17px] w-[25px] bg-[#2f74b8]" : "left-[25px] w-[10px] bg-[#8d8989]"}`} />
          </button>
        ))}
      </div>
      <div className="flex-1" />
      <div className="flex items-center text-[#111]">
        <IconButton label="Show hidden icons" className="w-[50px]"><svg viewBox="0 0 18 10" className="h-[10px] w-[18px]" fill="none" stroke="currentColor" strokeWidth="2.400"><path d="M1 9l8-8 8 8" /></svg></IconButton>
        <IconButton label="Assistant" className="w-[48px]">
          <svg viewBox="0 0 24 24" className="size-[24px]" fill="none" stroke="#d86a6a" strokeWidth="1.500">
            <ellipse cx="12" cy="6" rx="3.500" ry="5" /><ellipse cx="12" cy="18" rx="3.500" ry="5" />
            <ellipse cx="12" cy="6" rx="3.500" ry="5" transform="rotate(60 12 12)" /><ellipse cx="12" cy="18" rx="3.500" ry="5" transform="rotate(60 12 12)" />
            <ellipse cx="12" cy="6" rx="3.500" ry="5" transform="rotate(120 12 12)" /><ellipse cx="12" cy="18" rx="3.500" ry="5" transform="rotate(120 12 12)" />
            <circle cx="12" cy="12" r="2.500" stroke="#7c9ad0" />
          </svg>
        </IconButton>
        <IconButton label="Monitor" className="w-[48px]"><svg viewBox="0 0 22 18" className="h-[18px] w-[22px]" fill="none" stroke="currentColor" strokeWidth="3"><path d="M1.500 0v18M20.500 0v18M6.500 18V4l4.500 7 4.500-7v14" /></svg></IconButton>
        <IconButton label="Equalizer" className="w-[54px]"><svg viewBox="0 0 22 18" className="h-[18px] w-[22px]" fill="none" stroke="currentColor" strokeWidth="3"><path d="M0 4h16M19 4h3M14 0v8M0 14h4M8 14h14M7 10v8" /></svg></IconButton>
        <IconButton label="Microphone" className="w-[46px]"><svg viewBox="0 0 20 26" className="h-[26px] w-[20px]" fill="none" stroke="#2d4c98" strokeWidth="2"><rect x="6" y="1" width="8" height="15" rx="4" fill="#cfd8ea" /><path d="M1.500 11c0 12 17 12 17 0M10 20v6" /></svg></IconButton>
        <button type="button" className="w-[50px] text-[24px] leading-[34px]">中</button>
        <IconButton label="Wi-Fi" className="w-[46px]"><svg viewBox="0 0 26 20" className="h-[20px] w-[26px]" fill="none" stroke="currentColor" strokeWidth="2"><path d="M1 7Q13-4 25 7M5 11Q13 3 21 11M9 14Q13 10 17 14" /><circle cx="13" cy="17.500" r="2" fill="currentColor" stroke="none" /></svg></IconButton>
        <IconButton label="Volume" className="w-[28px]"><svg viewBox="0 0 24 20" className="h-[20px] w-[24px]" fill="none" stroke="currentColor" strokeWidth="1.800"><path d="M1 7h4l6-5v16l-6-5H1zM14 6q4 4 0 8M17 4q6 6 0 12M20 2q8 8 0 16" /></svg></IconButton>
        <IconButton label="Battery" className="w-[46px]"><svg viewBox="0 0 26 16" className="h-[16px] w-[26px]" fill="none" stroke="currentColor" strokeWidth="2"><rect x="1" y="1" width="21" height="14" rx="3" /><path d="M4 4h8v8H4z" fill="currentColor" /><path d="M24.500 5v6" /></svg></IconButton>
        <IconButton label="Notifications" className="mr-[18px] w-[52px]"><svg viewBox="0 0 22 24" className="h-[24px] w-[22px]" fill="none" stroke="currentColor" strokeWidth="1.800"><path d="M4 18V9a7 7 0 0 1 14 0v9l3 2H1zM8 21q3 4 6 0" /></svg></IconButton>
      </div>
    </footer>
  );
}

/* ---------- Player overlays ---------- */

function PlayerOverlays() {
  return (
    <>
      <button type="button" aria-label="Picture in picture" className="absolute top-[645px] right-[67px] flex size-[80px] items-center justify-center rounded-[20px] border-2 border-white/5 bg-[#252525]/50">
        <svg viewBox="0 0 36 36" className="size-[36px]" fill="none" stroke="#fff" strokeWidth="3">
          <path d="M18 33.500H4.500a2 2 0 0 1-2-2v-27a2 2 0 0 1 2-2h27a2 2 0 0 1 2 2V16" />
          <path d="M4 4l10 10" />
          <path d="M17 8v9H8z" fill="#fff" stroke="none" />
          <rect x="22" y="21.500" width="12.500" height="12.500" rx="2" />
        </svg>
      </button>
      <svg viewBox="0 0 110 106" className="pointer-events-none absolute right-[70px] bottom-[132px] h-[106px] w-[110px]" aria-label="TV">
        <path fill="#fff" fillOpacity=".8" stroke="#000" strokeOpacity=".15" fillRule="evenodd" d="M27 5q5-5 10 0l10 13H63L73 5q5-5 10 0 3 4 1 7l-4 6h6q20 1 22 20 2 28 0 46-2 18-22 20-31 2-62 0Q4 102 2 84 0 62 2 38 4 19 24 18h6l-4-6q-2-3 1-7zM39 48v33q1 7 8 4l26-16q6-5 0-10L47 43q-7-2-8 5z" />
      </svg>
      <div className="pointer-events-none absolute right-[164px] bottom-[46px] flex items-end gap-[20px] font-bold whitespace-nowrap text-white/80">
        <span className="font-['Noto_Sans_CJK_SC',sans-serif] text-[47px] leading-[58px]">尚硅谷</span>
        <span className="font-['Lato',sans-serif] text-[68px] leading-[88px] font-black text-[#f1eeee]/90 text-shadow-xs">bilibili</span>
      </div>
    </>
  );
}

export default function App() {
  return (
    <div className={`flex min-h-screen flex-col bg-white pt-[14px] pl-[5px] ${UI}`}>
      <div className="relative flex flex-1 overflow-hidden bg-black pr-[121px] pl-[127px]">
        <div className="flex min-w-0 flex-1 flex-col bg-[#efefef]">
          <Header />
          <main className="flex min-h-[1101px] flex-1">
            <div className="flex min-w-0 flex-1 flex-col border-t-[6px] border-r-[3px] border-l-[5px] border-t-[#9c9c9c] border-r-[#a6a6a6] border-l-[#9c9c9c] bg-[#efefef]">
              <div className="flex min-h-0 flex-1">
                <div className={`relative w-[20px] shrink-0 overflow-hidden bg-white ${MAP}`}>
                  <Topic className="top-[397px] -left-[16px] text-[50px] text-[#111]">oc</Topic>
                  <div className="absolute top-[463px] left-0 h-[2px] w-full bg-[#9b5f42]" />
                </div>
                <div className="flex w-[25px] shrink-0 items-center justify-center"><span className="mt-[120px] h-[52px] w-[3px] rounded bg-[#808080]" /></div>
                <Canvas />
                <div className="flex w-[25px] shrink-0 items-center justify-center"><span className="mt-[120px] h-[52px] w-[3px] rounded bg-[#808080]" /></div>
                <div className="w-[4px] bg-[#fafafa]" />
              </div>
              <div className="flex h-[30px] shrink-0 items-start justify-center border-b-2 border-[#b0b0b0] pt-[10px]">
                <span className="ml-[276px] h-[4px] w-[230px] rounded bg-[#858985]" />
              </div>
            </div>
            <SideTabs />
          </main>
          <DocTabs />
          <StatusBar />
          <Taskbar />
        </div>
        <PlayerOverlays />
      </div>
    </div>
  );
}
